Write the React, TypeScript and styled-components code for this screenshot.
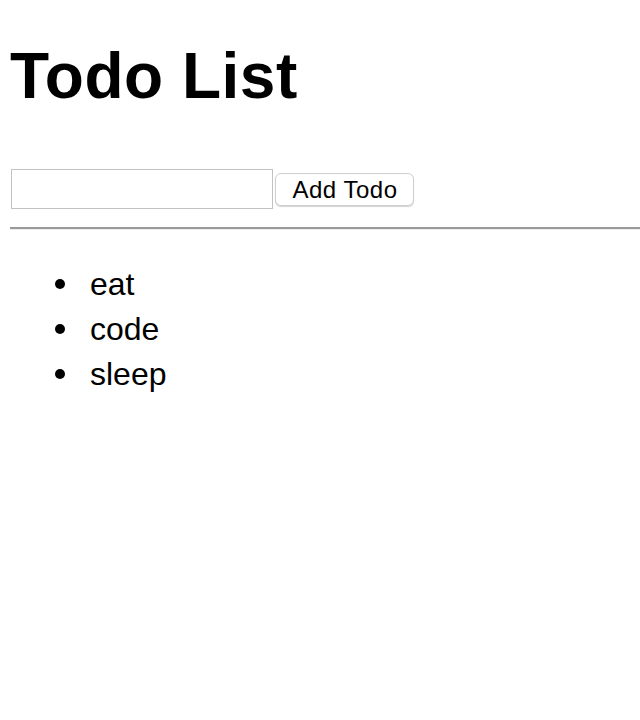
import React from "react";
import styled, { createGlobalStyle } from "styled-components";

const Global = createGlobalStyle`
  html, body { margin: 0; padding: 0; background: #fff; }
  body { font-family: "Liberation Sans", Arial, Helvetica, sans-serif; color: #000; }
`;

const Page = styled.div`
  padding: 40px 0 0 10px;
`;

const Title = styled.h1`
  margin: 0;
  font-size: 64px;
  line-height: 72px;
  font-weight: 700;
  letter-spacing: 0.5px;
`;

const Form = styled.form`
  display: flex;
  align-items: center;
  gap: 2px;
  margin-top: 57px;
  padding-left: 1px;
`;

const Input = styled.input`
  box-sizing: border-box;
  width: 262px;
  height: 40px;
  margin: 0;
  border: 1px solid #c2c2c2;
  border-radius: 0;
  padding: 0 6px;
  font-family: inherit;
  font-size: 22px;
  outline: none;
`;

const Button = styled.button`
  box-sizing: border-box;
  width: 139px;
  height: 33px;
  margin: 0;
  padding: 1px 0 0 1px;
  background: #fff;
  border: 1px solid #cfcfcf;
  border-radius: 6px;
  box-shadow: 0 1px 1px rgba(0, 0, 0, 0.18);
  font-family: inherit;
  font-size: 24px;
  letter-spacing: 0.5px;
  color: #000;
  line-height: 1;
`;

const Rule = styled.hr`
  margin: 18px 0 0;
  height: 0;
  border: 0;
  border-top: 2px solid #9a9a9a;
  border-bottom: 1px solid #eeeeee;
`;

const List = styled.ul`
  list-style: none;
  margin: 32px 0 0;
  padding: 0 0 0 45px;
`;

const Item = styled.li`
  display: flex;
  align-items: center;
  gap: 25px;
  font-size: 32px;
  line-height: 45px;
`;

const Dot = styled.span`
  flex: none;
  width: 10px;
  height: 10px;
  border-radius: 50%;
  background: #000;
  margin-top: -2px;
`;

const todos = ["eat", "code", "sleep"];

export default function App() {
  return (
    <Page>
      <Global />
      <Title>Todo List</Title>
      <Form onSubmit={(e) => e.preventDefault()}>
        <Input type="text" />
        <Button type="submit">Add Todo</Button>
      </Form>
      <Rule />
      <List>
        {todos.map((t) => (
          <Item key={t}>
            <Dot />
            {t}
          </Item>
        ))}
      </List>
    </Page>
  );
}
